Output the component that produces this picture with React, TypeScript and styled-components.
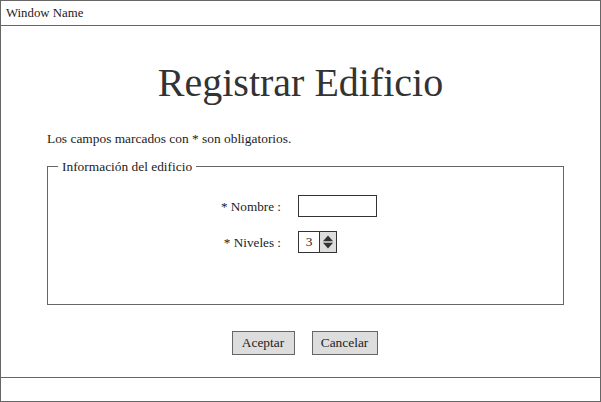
import React from "react";
import styled, { createGlobalStyle } from "styled-components";

const Global = createGlobalStyle`
  html, body { margin: 0; padding: 0; background: #fff; }
  body { font-family: "Liberation Serif", "Times New Roman", serif; color: #222; }
  * { box-sizing: border-box; }
`;

const Window = styled.div`
  width: 601px;
  height: 402px;
  border: 1px solid #666;
  display: flex;
  flex-direction: column;
  background: #fff;
`;

const TitleBar = styled.div`
  height: 25px;
  border-bottom: 1px solid #666;
  padding: 0 5px;
  font-size: 12.8px;
  line-height: 24px;
  color: #222;
`;

const Content = styled.div`
  flex: 1;
  display: flex;
  flex-direction: column;
`;

const StatusBar = styled.div`
  height: 24px;
  border-top: 1px solid #666;
`;

const Heading = styled.h1`
  margin: 34px 0 0;
  font-weight: normal;
  font-size: 40px;
  line-height: 46px;
  text-align: center;
  color: #333;
`;

const Note = styled.p`
  margin: 25px 0 0 46px;
  font-size: 13.4px;
  line-height: 15px;
`;

const Fieldset = styled.fieldset`
  margin: 13px 36px 0 46px;
  padding: 21px 0 51px;
  border: 1px solid #666;
  min-width: 0;
`;

const Legend = styled.legend`
  margin-left: 10px;
  padding: 0 4px;
  font-size: 13.4px;
  line-height: 15px;
`;

const FormGrid = styled.div`
  display: grid;
  grid-template-columns: 233px auto;
  column-gap: 17px;
  row-gap: 14px;
  align-items: center;
`;

const Label = styled.label`
  text-align: right;
  font-size: 13.2px;
  line-height: 15px;
`;

const TextBox = styled.div`
  width: 79px;
  height: 22px;
  border: 1px solid #333;
  background: #fff;
`;

const Spinner = styled.div`
  display: flex;
  width: 39px;
  height: 22px;
  border: 1px solid #333;
  background: #fff;
`;

const SpinValue = styled.div`
  flex: 1;
  font-size: 13.4px;
  line-height: 20px;
  text-align: center;
  border-right: 1px solid #333;
`;

const SpinButton = styled.div`
  width: 16px;
  background: #ddd;
  display: flex;
  align-items: center;
  justify-content: center;
`;

const Actions = styled.div`
  display: flex;
  justify-content: center;
  gap: 17px;
  margin: 26px 0 0 8px;
`;

const Button = styled.button<{ $w: number }>`
  width: ${(p) => p.$w}px;
  height: 24px;
  padding: 0;
  border: 1px solid #666;
  border-radius: 0;
  background: #ddd;
  font-family: "Liberation Serif", "Times New Roman", serif;
  font-size: 13.4px;
  color: #222;
`;

const SpinIcon = () => (
  <svg width="12" height="14" viewBox="0 0 12 14">
    <path d="M6 0.5 L11 6.2 L1 6.2 Z" fill="#333" />
    <path d="M6 13.5 L11 7.8 L1 7.8 Z" fill="#333" />
  </svg>
);

export default function App() {
  return (
    <>
      <Global />
      <Window>
        <TitleBar>Window Name</TitleBar>
        <Content>
          <Heading>Registrar Edificio</Heading>
          <Note>Los campos marcados con * son obligatorios.</Note>
          <Fieldset>
            <Legend>Información del edificio</Legend>
            <FormGrid>
              <Label>* Nombre :</Label>
              <TextBox />
              <Label>* Niveles :</Label>
              <Spinner>
                <SpinValue>3</SpinValue>
                <SpinButton>
                  <SpinIcon />
                </SpinButton>
              </Spinner>
            </FormGrid>
          </Fieldset>
          <Actions>
            <Button $w={63}>Aceptar</Button>
            <Button $w={66}>Cancelar</Button>
          </Actions>
        </Content>
        <StatusBar />
      </Window>
    </>
  );
}
